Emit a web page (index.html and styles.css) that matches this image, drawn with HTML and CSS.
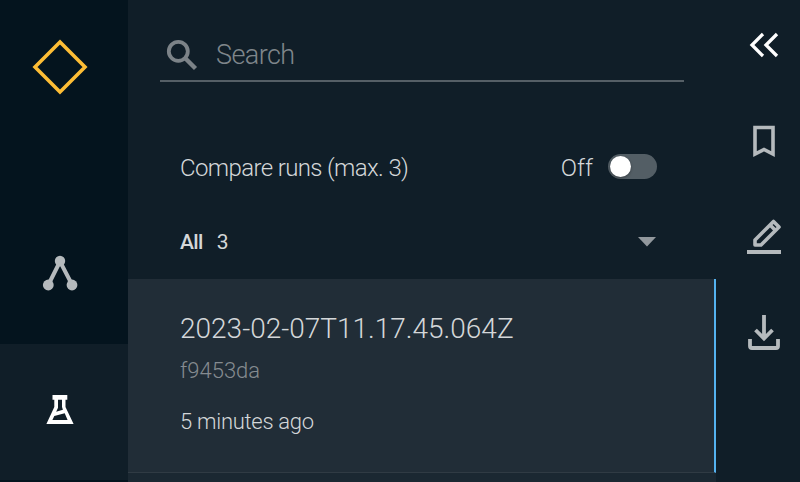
FILE: index.html
```html
<!DOCTYPE html>
<html lang="en">
<head>
<meta charset="utf-8">
<title>Experiment tracking</title>
<link rel="stylesheet" href="styles.css">
</head>
<body>
<div class="app">
  <nav class="nav">
    <a class="logo"><svg width="56" height="56" viewBox="0 0 56 56"><path d="M28 3 53 28 28 53 3 28Z" fill="none" stroke="#fdbd35" stroke-width="3.6"/></svg></a>
    <a class="tab"><svg width="36" height="38" viewBox="0 0 36 38"><path d="M6.5 29.5 18 6.5 30 29.5" fill="none" stroke="#b5babd" stroke-width="4"/><g fill="#b5babd"><circle cx="18" cy="6" r="5.2"/><circle cx="6.3" cy="30" r="5.4"/><circle cx="30" cy="30" r="5.4"/></g></svg></a>
    <a class="tab tab-active"><svg width="28" height="30" viewBox="0 0 28 30"><path fill="#fff" fill-rule="evenodd" d="M6.5 0H21.3V4.7H19.5V12L27.6 29H.4L8.3 12V4.7H6.5ZM12 4.7V12.8L10.2 16.7 16.9 14.7 16 12V4.7ZM8.3 20.9 6.4 25.1H21.6L18.7 18.2Z"/></svg></a>
  </nav>
  <main class="sidebar">
    <div class="search">
      <svg width="32" height="32" viewBox="0 0 32 32" fill="none" stroke="#7c8388"><circle cx="12.3" cy="12.3" r="9.5" stroke-width="3.8"/><path d="m19 19 10.5 10.5" stroke-width="4.4"/></svg>
      <span class="search-text">Search</span>
    </div>
    <div class="compare">
      <span class="compare-text">Compare runs (max. 3)</span>
      <span class="off">Off</span>
      <span class="switch"><span class="thumb"></span></span>
    </div>
    <div class="group">
      <b class="all">All</b><span class="count">3</span>
      <svg class="caret" width="18" height="10" viewBox="0 0 18 10"><path d="M0 0H18L9 9.5Z" fill="#92989d"/></svg>
    </div>
    <section class="run">
      <h1 class="title">2023-02-07T11.17.45.064Z</h1>
      <p class="hash">f9453da</p>
      <p class="time">5 minutes ago</p>
    </section>
    <div class="next-run"></div>
  </main>
  <aside class="tools">
    <svg width="36" height="30" viewBox="0 0 36 30" fill="none" stroke="#fff" stroke-width="3.3"><path d="m17 4-11 11 11 11M31 4l-11 11 11 11"/></svg>
    <svg width="36" height="36" viewBox="0 0 36 36" fill="none" stroke="#b5babd" stroke-width="3.6"><path d="M9 6.5H27V33L18 28.5 9 33Z"/></svg>
    <svg width="36" height="36" viewBox="0 0 36 36" fill="none" stroke="#b5babd"><path d="M9 27V22L27.5 3.5 33 9 15 27ZM24.3 7.2l5 5" stroke-width="3.6" stroke-linejoin="round"/><path d="M1 34H35" stroke-width="4"/></svg>
    <svg width="36" height="38" viewBox="0 0 36 38" fill="none" stroke="#b5babd" stroke-width="3.8"><path d="M18 0V23.5M9.5 15 18 23.5 26.5 15M4 24V31Q4 33 6 33H30Q32 33 32 31V24"/></svg>
  </aside>
</div>
</body>
</html>
```
FILE: styles.css
```css
* { box-sizing: border-box; }
body { margin: 0; font-family: Roboto, "Liberation Sans", sans-serif; background: #101e28; color: #d4d7d9; }
svg { display: block; flex: none; }
h1, p { margin: 0; font-weight: 300; }
.app { display: grid; grid-template-columns: 128px 588px 84px; height: 482px; overflow: hidden; white-space: nowrap; }
.nav { background: #04141e; display: grid; grid-template-rows: 207px 137px 136px; }
.logo { padding: 39px 0 0 32px; }
.tab { padding: 48px 0 0 42px; }
.tab-active { background: #101e28; padding: 51px 0 0 46px; }
.sidebar { display: grid; grid-template-rows: 82px 122px 75px 194px 9px; }
.search { margin: 0 32px; border-bottom: 2px solid #555f66; display: flex; padding: 39px 0 0 6px; gap: 18px; }
.search-text { font-size: 27px; line-height: 32px; letter-spacing: -.6px; color: #7f868b; font-weight: 300; }
.compare { display: flex; align-items: center; height: 40px; margin: 65px 59px 0 52px; font-size: 24px; font-weight: 300; }
.compare-text { letter-spacing: -.62px; padding-top: 2px; }
.off { margin-left: auto; padding-top: 2px; }
.switch { width: 49px; height: 25px; border-radius: 13px; background: #535e65; margin: 0 0 1px 15px; padding: 2px; }
.thumb { display: block; width: 21px; height: 21px; border-radius: 50%; background: #fff; box-shadow: 0 1px 3px #0005; }
.group { display: flex; align-items: center; margin: 0 60px 0 52px; font-size: 21px; }
.all { font-weight: 500; letter-spacing: -.6px; }
.count { margin-left: 14px; }
.caret { margin-left: auto; }
.run { background: #212d37; border-right: 2px solid #54b2ef; border-bottom: 1px solid #303b44; padding: 34px 0 0 52px; }
.title { font-size: 28px; line-height: 32px; width: max-content; }
.hash { font-size: 22px; line-height: 28px; margin-top: 12px; color: #858b90; width: max-content; }
.time { font-size: 22px; line-height: 28px; letter-spacing: -.28px; margin-top: 23px; width: max-content; }
.next-run { background: #1b2832; }
.tools { padding: 30px 0 0 30px; display: flex; flex-direction: column; align-items: center; width: 66px; }
.tools svg + svg { margin-top: 61px; }
```
